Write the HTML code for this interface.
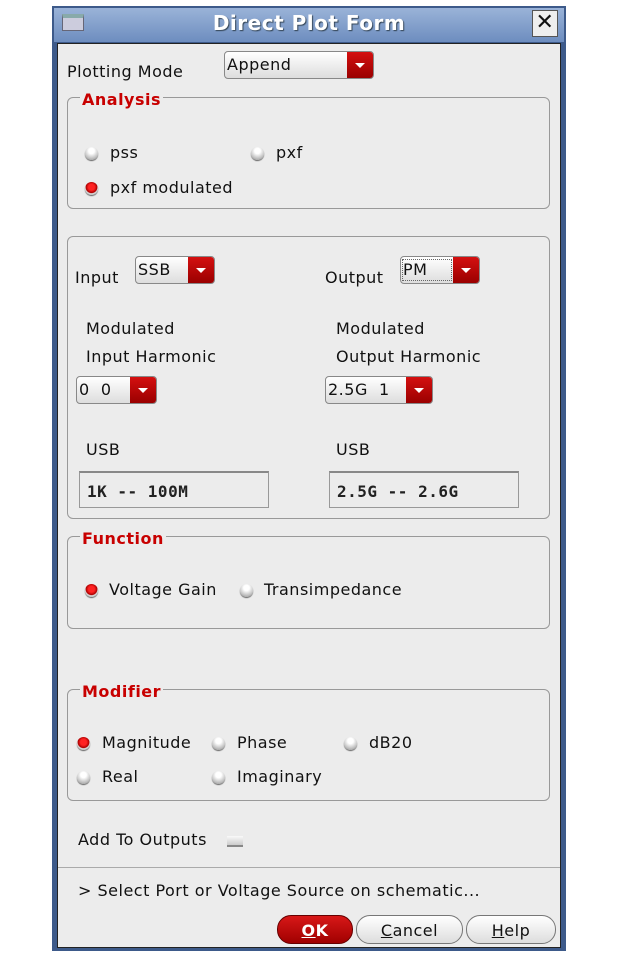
<!DOCTYPE html>
<html><head><meta charset="utf-8"><style>
body{margin:0;width:636px;height:955px;background:#fff;position:relative;overflow:hidden;font-family:"DejaVu Sans","Liberation Sans",sans-serif;font-size:16px;color:#111;letter-spacing:0.5px}
.a{position:absolute;white-space:nowrap;line-height:20px}
.win{position:absolute;left:52px;top:6px;width:514px;height:945px;background:#3d5a8a;}
.title{position:absolute;left:54px;top:8px;width:510px;height:34px;background:linear-gradient(#9ab3d8,#6d8dbf);}
.content{position:absolute;left:57px;top:43px;width:504px;height:905px;background:#ececec;border:1px solid #222;box-sizing:border-box}
.box{position:absolute;border:1px solid #999;border-radius:6px;left:67px;width:481px}
.leg{position:absolute;color:#c80000;font-weight:bold;background:#ececec;padding:0 2px;line-height:18px}
.dd{position:absolute;height:28px;border:1px solid #888;border-radius:4px;background:linear-gradient(#fff,#ddd);box-sizing:border-box;overflow:hidden}
.dd span{position:absolute;left:2px;top:3px;line-height:20px}
.dd i{position:absolute;right:0;top:0;bottom:0;width:26px;background:linear-gradient(#d41010,#9a0000)}
.dd i:after{content:"";position:absolute;left:8px;top:11px;border-left:5px solid transparent;border-right:5px solid transparent;border-top:5px solid #fff}
.r{position:absolute;width:13px;height:13px;border-radius:50%;background:radial-gradient(circle at 50% 30%,#fff 25%,#bbb 70%,#888 100%);box-shadow:0 1px 1px #666}
.r.on{background:radial-gradient(circle at 50% 40%,#f22 30%,#a00 55%,#ddd 62%,#999 90%)}
.tf{position:absolute;height:37px;border:1px solid #999;border-top:2px solid #888;background:#ececec;box-sizing:border-box;font-family:"DejaVu Sans Mono","Liberation Mono",monospace;font-size:16px;font-weight:bold;letter-spacing:0.5px;padding:9px 0 0 7px;color:#222}
.btn{position:absolute;top:915px;height:29px;border:1px solid #777;border-radius:14px;background:linear-gradient(#fff,#ddd);text-align:center;line-height:29px;box-sizing:border-box}
</style></head><body>
<div class="win"></div>
<div class="title"></div>
<div style="position:absolute;left:62px;top:14px;width:22px;height:17px;background:#ccd;border:1px solid #667;box-sizing:border-box;border-top:4px solid #8aa"></div>
<div class="a" style="left:0;width:618px;text-align:center;top:11px;font-size:20px;font-weight:bold;color:#fff;line-height:24px;text-shadow:1px 1px 1px #345">Direct Plot Form</div>
<div style="position:absolute;left:532px;top:10px;width:26px;height:27px;background:#eee;border:1px solid #555;box-sizing:border-box;text-align:center;font-size:22px;line-height:24px;font-weight:bold">✕</div>
<div class="content"></div>

<div class="a" style="left:67px;top:62px">Plotting Mode</div>
<div class="dd" style="left:224px;top:51px;width:150px"><span>Append</span><i></i></div>

<div class="box" style="top:97px;height:110px"></div>
<div class="leg" style="left:80px;top:91px">Analysis</div>
<div class="r" style="left:85px;top:147px"></div><div class="a" style="left:110px;top:143px">pss</div>
<div class="r" style="left:251px;top:147px"></div><div class="a" style="left:276px;top:143px">pxf</div>
<div class="r on" style="left:85px;top:182px"></div><div class="a" style="left:110px;top:178px">pxf modulated</div>

<div class="box" style="top:236px;height:281px"></div>
<div class="a" style="left:75px;top:268px">Input</div>
<div class="dd" style="left:135px;top:256px;width:80px"><span>SSB</span><i></i></div>
<div class="a" style="left:325px;top:268px">Output</div>
<div class="dd" style="left:400px;top:256px;width:80px"><span style="outline:1px dotted #666;width:48px">PM</span><i></i></div>
<div class="a" style="left:86px;top:319px">Modulated</div>
<div class="a" style="left:86px;top:347px">Input Harmonic</div>
<div class="a" style="left:336px;top:319px">Modulated</div>
<div class="a" style="left:336px;top:347px">Output Harmonic</div>
<div class="dd" style="left:76px;top:376px;width:81px"><span>0&nbsp;&nbsp;0</span><i></i></div>
<div class="dd" style="left:325px;top:376px;width:108px"><span>2.5G&nbsp;&nbsp;1</span><i></i></div>
<div class="a" style="left:86px;top:440px">USB</div>
<div class="a" style="left:336px;top:440px">USB</div>
<div class="tf" style="left:79px;top:471px;width:190px">1K -- 100M</div>
<div class="tf" style="left:329px;top:471px;width:190px">2.5G -- 2.6G</div>

<div class="box" style="top:536px;height:91px"></div>
<div class="leg" style="left:80px;top:530px">Function</div>
<div class="r on" style="left:85px;top:584px"></div><div class="a" style="left:109px;top:580px">Voltage Gain</div>
<div class="r" style="left:240px;top:584px"></div><div class="a" style="left:264px;top:580px">Transimpedance</div>

<div class="box" style="top:689px;height:110px"></div>
<div class="leg" style="left:80px;top:683px">Modifier</div>
<div class="r on" style="left:77px;top:737px"></div><div class="a" style="left:102px;top:733px">Magnitude</div>
<div class="r" style="left:212px;top:737px"></div><div class="a" style="left:237px;top:733px">Phase</div>
<div class="r" style="left:344px;top:737px"></div><div class="a" style="left:369px;top:733px">dB20</div>
<div class="r" style="left:77px;top:771px"></div><div class="a" style="left:102px;top:767px">Real</div>
<div class="r" style="left:212px;top:771px"></div><div class="a" style="left:237px;top:767px">Imaginary</div>

<div class="a" style="left:78px;top:830px">Add To Outputs</div>
<div style="position:absolute;left:227px;top:836px;width:16px;height:9px;background:linear-gradient(#fafafa,#ccc);border-bottom:2px solid #888"></div>
<div style="position:absolute;left:58px;top:867px;width:502px;height:1px;background:#aaa"></div>
<div class="a" style="left:78px;top:881px">&gt; Select Port or Voltage Source on schematic...</div>
<div class="btn" style="left:277px;width:76px;background:linear-gradient(#d81818,#a00000);color:#fff;font-weight:bold;border-color:#600"><u>O</u>K</div>
<div class="btn" style="left:356px;width:107px"><u>C</u>ancel</div>
<div class="btn" style="left:466px;width:90px"><u>H</u>elp</div>
</body></html>
